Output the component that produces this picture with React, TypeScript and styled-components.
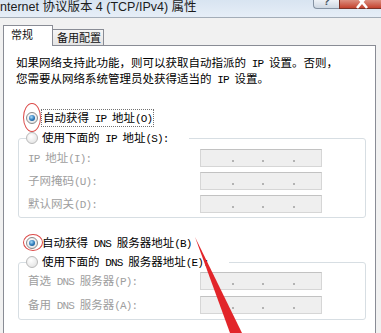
import React from 'react'
import styled, { createGlobalStyle, css } from 'styled-components'

const GlobalStyle = createGlobalStyle`
  html, body {
    margin: 0;
    padding: 0;
  }
  body {
    width: 381px;
    height: 333px;
    overflow: hidden;
    background: #f0f0f0;
    font-family: 'Noto Sans CJK SC', sans-serif;
  }
`

const Window = styled.div`
  position: relative;
  width: 381px;
  height: 333px;
  overflow: hidden;
  background: #f1f1f1;
  display: flex;
  flex-direction: column;
`

const TitleBar = styled.div`
  flex: none;
  height: 17px;
  display: flex;
  align-items: flex-start;
  justify-content: space-between;
  background: linear-gradient(#d8e4f1, #e6eef7);
  border-bottom: 1px solid #a3adb8;
`

const Title = styled.span`
  font-family: 'Liberation Sans', 'Noto Sans CJK SC', sans-serif;
  font-size: 12.5px;
  line-height: 14px;
  color: #1c1c1c;
  white-space: nowrap;
`

const Captions = styled.div`
  display: flex;
`

const HelpButton = styled.div`
  width: 26px;
  height: 9px;
  box-sizing: border-box;
  overflow: hidden;
  border: 1px solid #8593a3;
  border-top: none;
  border-right: none;
  border-bottom-left-radius: 4px;
  background: linear-gradient(#eef2f7, #cdd7e2);
  display: flex;
  justify-content: center;
`

const HelpGlyph = styled.span`
  display: block;
  margin-top: -5px;
  font-family: 'Liberation Sans', sans-serif;
  font-size: 11px;
  font-weight: bold;
  line-height: 12px;
  color: #4a5866;
`

const CloseButton = styled.div`
  width: 42px;
  height: 9px;
  box-sizing: border-box;
  border: 1px solid #7b3328;
  border-top: none;
  border-right: none;
  background: linear-gradient(#dc8f80, #c4432f);
  display: flex;
  justify-content: center;
`

const Body = styled.div`
  flex: 1;
  display: flex;
  flex-direction: column;
  padding-top: 7px;
`

const TabRow = styled.div`
  position: relative;
  z-index: 1;
  display: flex;
  align-items: flex-end;
  height: 21px;
  margin: 0 0 -1px 3px;
`

const Tab = styled.div<{ $active?: boolean }>`
  box-sizing: border-box;
  font-family: 'Noto Sans CJK SC', sans-serif;
  font-size: 11px;
  color: #111;
  border: 1px solid #898c95;
  border-bottom: none;
  white-space: nowrap;
  ${({ $active }) =>
    $active
      ? css`
          width: 50px;
          height: 21px;
          line-height: 17px;
          padding-left: 7px;
          background: #fff;
        `
      : css`
          width: 51px;
          height: 16px;
          line-height: 15px;
          padding-left: 4px;
          margin-bottom: 1px;
          border-left: none;
          background: linear-gradient(#f6f6f6, #e4e4e4);
        `}
`

const Panel = styled.div`
  flex: 1;
  width: 373px;
  margin-left: 3px;
  box-sizing: border-box;
  background: #fff;
  border: 1px solid #898c95;
  border-bottom: none;
  padding: 9px 9px 0 12px;
  display: flex;
  flex-direction: column;
  font-size: 11.5px;
  color: #000;
`

const Para = styled.div`
  line-height: 14px;
  white-space: nowrap;
`

const Latin = styled.span`
  font-family: 'Liberation Mono', monospace;
  font-size: 11px;
  letter-spacing: -0.85px;
`

const RadioRow = styled.div<{ $top?: number; $left?: number }>`
  position: relative;
  display: flex;
  align-items: center;
  gap: 4px;
  height: 16px;
  line-height: 14px;
  white-space: nowrap;
  margin-top: ${({ $top }) => $top ?? 0}px;
  margin-left: ${({ $left }) => $left ?? 0}px;
`

const Radio = styled.span<{ $checked?: boolean }>`
  flex: none;
  width: 12px;
  height: 12px;
  box-sizing: border-box;
  border-radius: 50%;
  border: 1px solid ${({ $checked }) => ($checked ? '#8a8a8a' : '#b9b9b9')};
  background: radial-gradient(circle at 40% 35%, #ffffff, #dedede);
  display: flex;
  align-items: center;
  justify-content: center;

  &::after {
    content: '';
    display: ${({ $checked }) => ($checked ? 'block' : 'none')};
    width: 6px;
    height: 6px;
    border-radius: 50%;
    background: radial-gradient(circle at 40% 35%, #a8dcfa, #2a77b8 55%, #134a7c);
  }
`

const FocusLabel = styled.span`
  padding: 0 1px;
  outline: 1px dotted rgba(0, 0, 0, 0.55);
  outline-offset: 0;
`

const Mark = styled.span<{ $x: number; $y: number; $w: number; $h: number }>`
  position: absolute;
  left: ${({ $x }) => $x}px;
  top: ${({ $y }) => $y}px;
  width: ${({ $w }) => $w}px;
  height: ${({ $h }) => $h}px;
  box-sizing: border-box;
  border: 1.5px solid #dc4a48;
  border-radius: 50%;
  pointer-events: none;
`

const Group = styled.fieldset<{ $top: number; $pt: number; $pb: number }>`
  margin: ${({ $top }) => $top}px 0 0 2px;
  padding: ${({ $pt }) => $pt}px 9px ${({ $pb }) => $pb}px 9px;
  min-width: 0;
  border: 1px solid #d7dee3;
  border-radius: 3px;
`

const Legend = styled.legend`
  margin-left: -2px;
  padding: 0 20px 0 0;
`

const FieldGrid = styled.div<{ $gap: number }>`
  display: grid;
  grid-template-columns: 172px 122px;
  grid-auto-rows: 18px;
  row-gap: ${({ $gap }) => $gap}px;
  align-items: center;
`

const FieldLabel = styled.span`
  color: #9e9e9e;
  line-height: 14px;
  white-space: nowrap;
`

const IpBox = styled.div`
  box-sizing: border-box;
  height: 18px;
  border: 1px solid #d6d6d6;
  border-top-color: #c2c2c2;
  background: #efefef;
  display: grid;
  grid-template-columns: 27px 2px 28px 2px 29px 2px 1fr;
  align-items: end;
  padding: 0 0 4px 4px;
`

const Dot = styled.span`
  width: 2px;
  height: 2px;
  background: #b3b3b3;
`

const CheckRow = styled.div`
  display: flex;
  align-items: center;
  gap: 5px;
  margin: 13px 0 0 7px;
  height: 16px;
  white-space: nowrap;
`

const CheckBox = styled.span`
  width: 13px;
  height: 13px;
  box-sizing: border-box;
  border: 1px solid #8f8f8f;
  background: linear-gradient(#eaeaea, #fdfdfd);
`

const Arrow = styled.svg`
  position: absolute;
  left: 0;
  top: 0;
  pointer-events: none;
`

function T({ children }: { children: string }) {
  const parts = children.split(/([\x20-\x7e]+)/)
  return <>{parts.map((p, i) => (i % 2 ? <Latin key={i}>{p}</Latin> : p))}</>
}

function IpField() {
  return (
    <IpBox>
      <span />
      <Dot />
      <span />
      <Dot />
      <span />
      <Dot />
      <span />
    </IpBox>
  )
}

const ipRows = ['IP 地址(I):', '子网掩码(U):', '默认网关(D):']
const dnsRows = ['首选 DNS 服务器(P):', '备用 DNS 服务器(A):']

export default function App() {
  return (
    <Window>
      <GlobalStyle />
      <TitleBar>
        <Title>nternet 协议版本 4 (TCP/IPv4) 属性</Title>
        <Captions>
          <HelpButton>
            <HelpGlyph>?</HelpGlyph>
          </HelpButton>
          <CloseButton>
            <svg width="41" height="9" viewBox="0 0 41 9">
              <path d="M17 -4 L27 8 M27 -4 L17 8" stroke="#ffffff" strokeWidth="2.6" fill="none" />
            </svg>
          </CloseButton>
        </Captions>
      </TitleBar>

      <Body>
        <TabRow>
          <Tab $active>常规</Tab>
          <Tab>备用配置</Tab>
        </TabRow>
        <Panel>
          <Para>
            <div>
              <T>如果网络支持此功能，则可以获取自动指派的 IP 设置。否则，</T>
            </div>
            <div>
              <T>您需要从网络系统管理员处获得适当的 IP 设置。</T>
            </div>
          </Para>

          <RadioRow $top={23} $left={10}>
            <Mark $x={-3} $y={-7} $w={18} $h={29} />
            <Radio $checked />
            <FocusLabel>
              <T>自动获得 IP 地址(O)</T>
            </FocusLabel>
          </RadioRow>

          <Group $top={4} $pt={3} $pb={4}>
            <Legend>
              <RadioRow>
                <Radio />
                <span>
                  <T>使用下面的 IP 地址(S):</T>
                </span>
              </RadioRow>
            </Legend>
            <FieldGrid $gap={5}>
              {ipRows.map((r) => (
                <React.Fragment key={r}>
                  <FieldLabel>
                    <T>{r}</T>
                  </FieldLabel>
                  <IpField />
                </React.Fragment>
              ))}
            </FieldGrid>
          </Group>

          <RadioRow $top={17} $left={10}>
            <Mark $x={-3} $y={-1} $w={20} $h={17} />
            <Radio $checked />
            <span>
              <T>自动获得 DNS 服务器地址(B)</T>
            </span>
          </RadioRow>

          <Group $top={3} $pt={2} $pb={5}>
            <Legend>
              <RadioRow>
                <Radio />
                <span>
                  <T>使用下面的 DNS 服务器地址(E):</T>
                </span>
              </RadioRow>
            </Legend>
            <FieldGrid $gap={6}>
              {dnsRows.map((r) => (
                <React.Fragment key={r}>
                  <FieldLabel>
                    <T>{r}</T>
                  </FieldLabel>
                  <IpField />
                </React.Fragment>
              ))}
            </FieldGrid>
          </Group>

          <CheckRow>
            <CheckBox />
            <span>
              <T>退出时验证设置(L)</T>
            </span>
          </CheckRow>
        </Panel>
      </Body>

      <Arrow width="381" height="333" viewBox="0 0 381 333">
        <path d="M195 237 L230 333 L242 333 Z" fill="#e2252a" />
      </Arrow>
    </Window>
  )
}
